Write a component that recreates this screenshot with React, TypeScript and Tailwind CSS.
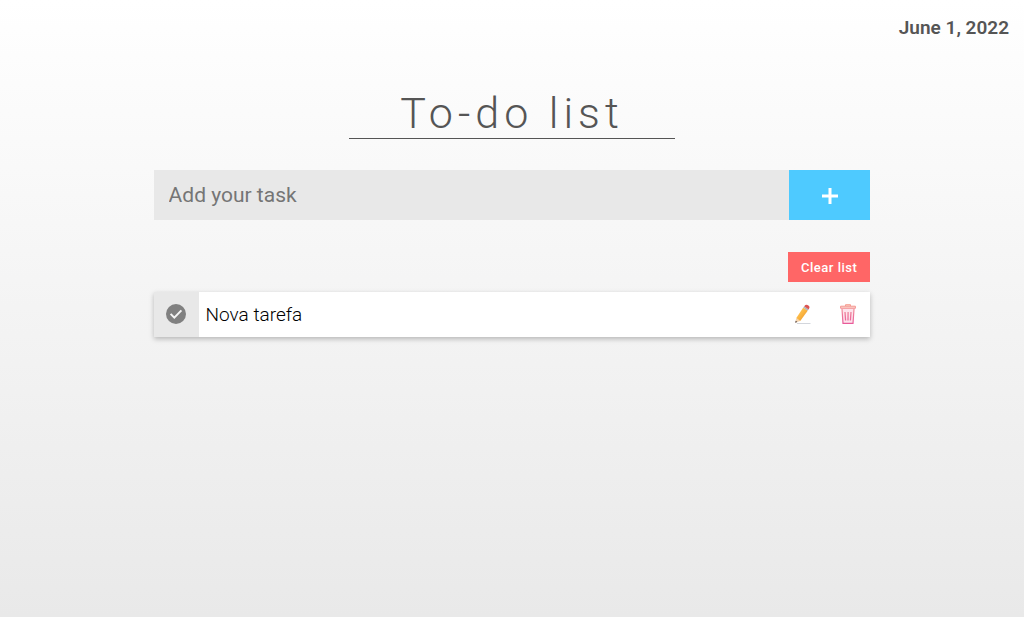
import { useState } from "react";
import type { FormEvent } from "react";

type Task = { id: number; text: string; done: boolean };

function CheckIcon() {
  return (
    <svg viewBox="0 0 20 20" className="size-5" aria-hidden="true">
      <circle cx="10" cy="10" r="10" fill="#808080" />
      <path d="M4.6 9.9 8.3 13.6 15.4 6.4" fill="none" stroke="#f4f4f4" strokeWidth="2" />
    </svg>
  );
}

function PencilIcon() {
  return (
    <svg viewBox="0 0 20 20" className="size-5" aria-hidden="true">
      <defs>
        <linearGradient id="pencil-body" x1="0" y1="0" x2="1" y2="1">
          <stop offset="0" stopColor="#ffd36b" />
          <stop offset="0.5" stopColor="#fbb540" />
          <stop offset="1" stopColor="#e08a2c" />
        </linearGradient>
      </defs>
      <path d="M4 19.5H17.5" stroke="#d3d6dc" strokeWidth="1" />
      <path d="M3.3 13.9 2.2 18.8 7.2 16.9Z" fill="#f5d3ad" />
      <path d="M2.7 16.8 2.2 18.8 4.4 18Z" fill="#4b4548" />
      <path d="M10.3 3.5 14.7 6.7 7.2 16.9 3.3 13.9Z" fill="url(#pencil-body)" />
      <path d="M10.3 3.5 11.2 2.2 15.6 5.4 14.7 6.7Z" fill="#a9b4bd" />
      <path d="M11.2 2.2Q12.7.2 14.5.9L16.1 2.1Q17.2 3.5 15.6 5.4Z" fill="#dd5350" />
    </svg>
  );
}

function TrashIcon() {
  return (
    <svg viewBox="0 0 20 20" className="size-5" fill="none" aria-hidden="true">
      <defs>
        <linearGradient id="bin-line" x1="0" y1="0" x2="0" y2="20" gradientUnits="userSpaceOnUse">
          <stop offset="0" stopColor="#f6a08f" />
          <stop offset="0.4" stopColor="#ef829a" />
          <stop offset="1" stopColor="#e8599a" />
        </linearGradient>
      </defs>
      <path d="M4 5H16L15 19.4H5Z" fill="#fde3ec" />
      <g stroke="url(#bin-line)">
        <path d="M7.5 2V.7H12.5V2M2.6 2.2H17.4V4.3H2.6Z" fill="#fbd0c6" />
        <path d="M4 5 5 19.4H15L16 5" strokeWidth="1.2" />
        <path d="M7 8 7.6 16.5M10.1 8 10 16.5M13 8 12.4 16.5" strokeWidth="1.3" />
      </g>
    </svg>
  );
}

export default function App() {
  const [tasks, setTasks] = useState<Task[]>([{ id: 1, text: "Nova tarefa", done: false }]);
  const [draft, setDraft] = useState("");

  const addTask = (event: FormEvent) => {
    event.preventDefault();
    const text = draft.trim();
    if (!text) return;
    setTasks([...tasks, { id: Date.now(), text, done: false }]);
    setDraft("");
  };

  const toggle = (id: number) =>
    setTasks(tasks.map((task) => (task.id === id ? { ...task, done: !task.done } : task)));

  const edit = (task: Task) => {
    setDraft(task.text);
    setTasks(tasks.filter((item) => item.id !== task.id));
  };

  return (
    <div className="flex min-h-screen flex-col bg-linear-to-b from-white to-[#e9e9e9] font-['Roboto',sans-serif] text-[#555555]">
      <header className="flex justify-end px-[15px] pt-4">
        <time dateTime="2022-06-01" className="text-[19px] leading-6 font-semibold">
          June 1, 2022
        </time>
      </header>

      <main className="mx-auto flex w-[70%] flex-col pt-11">
        <h1 className="self-center border-b border-[#555555] px-[51px] pt-1 text-[43px] leading-[50px] font-light tracking-[5px]">
          To-do list
        </h1>

        <form onSubmit={addTask} className="mt-[31px] flex h-[50px]">
          <input
            type="text"
            aria-label="Add your task"
            placeholder="Add your task"
            value={draft}
            onChange={(event) => setDraft(event.target.value)}
            className="min-w-0 flex-1 bg-[#e8e8e8] px-[15px] pt-px text-[21px] text-[#333333] outline-none placeholder:text-[#757575]"
          />
          <button
            type="submit"
            aria-label="Add task"
            className="flex w-[81px] items-center justify-center bg-[#4ecaff] pt-px text-white"
          >
            <svg viewBox="0 0 16 16" className="size-4" aria-hidden="true">
              <path d="M8 0V16M0 8H16" stroke="currentColor" strokeWidth="3" />
            </svg>
          </button>
        </form>

        <button
          type="button"
          onClick={() => setTasks([])}
          className="mt-8 h-[30px] self-end bg-[#ff6666] px-[13px] pt-px text-[13px] font-medium tracking-[0.04em] text-white"
        >
          Clear list
        </button>

        <ul className="mt-[10px] flex flex-col gap-2">
          {tasks.map((task) => (
            <li key={task.id} className="flex h-[45px] items-stretch bg-white shadow-[0_2px_5px_rgba(0,0,0,0.25)]">
              <button
                type="button"
                aria-label="Complete task"
                aria-pressed={task.done}
                onClick={() => toggle(task.id)}
                className="flex w-[45px] items-center justify-center bg-[#e8e8e8] pb-px"
              >
                <CheckIcon />
              </button>
              <span
                className={`flex flex-1 items-center px-[7px] pt-px text-[19px] font-light text-black ${task.done ? "line-through" : ""}`}
              >
                {task.text}
              </span>
              <button
                type="button"
                aria-label="Edit task"
                onClick={() => edit(task)}
                className="flex w-[45px] items-center justify-center pb-px"
              >
                <PencilIcon />
              </button>
              <button
                type="button"
                aria-label="Delete task"
                onClick={() => setTasks(tasks.filter((item) => item.id !== task.id))}
                className="flex w-[45px] items-center justify-center pb-px"
              >
                <TrashIcon />
              </button>
            </li>
          ))}
        </ul>
      </main>
    </div>
  );
}
